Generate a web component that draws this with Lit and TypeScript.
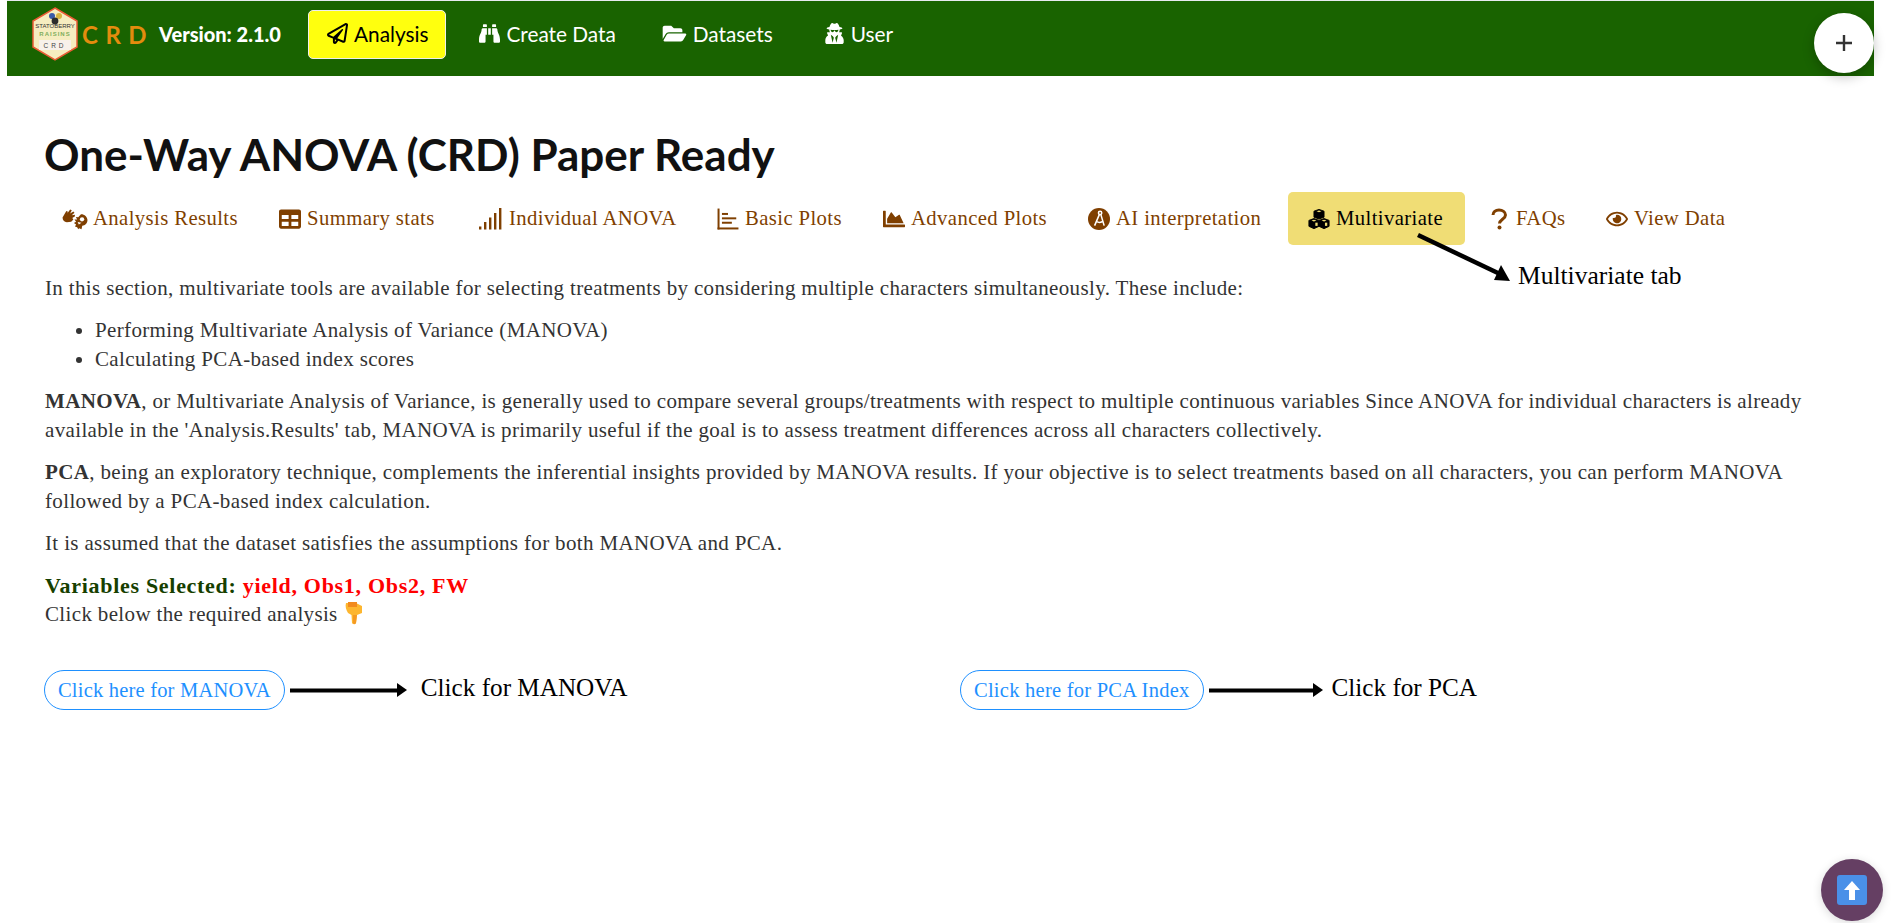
import { LitElement, css, html, svg } from "lit";
import { customElement } from "lit/decorators.js";

const icon = (box: string, d: string, cls = "") => html`<svg class="ico ${cls}" viewBox=${box}><path fill="currentColor" d=${d}></path></svg>`;

const plane = icon("0 0 512 512", "M440 6.5L24 246.4c-34.4 19.9-31.1 70.8 5.7 85.9L144 379.6V464c0 46.4 59.2 65.5 86.6 28.6l43.8-59.1 111.9 46.2c5.9 2.4 12.1 3.6 18.3 3.6 8.2 0 16.3-2.1 23.6-6.2 12.8-7.2 21.6-20 23.9-34.5l59.4-387.2c6.1-40.1-36.9-68.8-71.5-48.9zM192 464v-64.6l36.6 15.1L192 464zm212.6-28.7l-153.8-63.5L391 169.5c10.7-15.5-9.5-33.5-23.7-21.2L155.8 332.6 48 288 464 48l-59.4 387.3z");
const binoculars = icon("0 0 512 512", "M416 48c0-8.84-7.16-16-16-16h-64c-8.84 0-16 7.16-16 16v48h96V48zM63.91 159.99C61.4 253.84 3.46 274.22 0 404v44c0 17.67 14.33 32 32 32h96c17.67 0 32-14.33 32-32V288h32V128H95.84c-17.63 0-31.45 14.37-31.93 31.99zm384.18 0c-.48-17.62-14.3-31.99-31.93-31.99H320v160h32v160c0 17.67 14.33 32 32 32h96c17.67 0 32-14.33 32-32v-44c-3.46-129.78-61.4-150.16-63.91-244.01zM176 32h-64c-8.84 0-16 7.16-16 16v48h96V48c0-8.84-7.16-16-16-16zm48 256h64V128h-64v160z");
const folder = icon("0 0 576 512", "M572.694 292.093L500.27 416.248A63.997 63.997 0 0 1 444.989 448H45.025c-18.523 0-30.064-20.093-20.731-36.093l72.424-124.155A64 64 0 0 1 152 256h399.964c18.523 0 30.064 20.093 20.73 36.093zM152 224h328v-48c0-26.51-21.49-48-48-48H272l-64-64H48C21.49 64 0 85.49 0 112v278.046l69.077-118.418C86.214 242.25 117.989 224 152 224z", "wide");
const secret = icon("0 0 448 512", "M383.9 308.3l23.9-62.6c4-10.5-3.7-21.7-15-21.7h-58.5c11-18.9 17.8-40.6 17.8-64v-.3c39.2-7.8 64-19.1 64-31.7 0-13.3-27.3-25.1-70.1-33-9.2-32.8-27-65.8-40.6-82.8-9.5-11.9-25.9-15.6-39.5-8.8l-27.6 13.8c-9 4.5-19.6 4.5-28.6 0L182.1 3.4c-13.6-6.8-30-3.1-39.5 8.8-13.5 17-31.4 50-40.6 82.8-42.7 7.9-70 19.7-70 33 0 12.6 24.8 23.9 64 31.7v.3c0 23.4 6.8 45.1 17.8 64H56.3c-11.5 0-19.2 11.7-14.7 22.3l25.8 60.2C27.3 329.8 0 372.7 0 422.4v44.8C0 491.9 20.1 512 44.8 512h358.4c24.7 0 44.8-20.1 44.8-44.8v-44.8c0-48.4-25.8-90.4-64.1-114.1zM176 480l-41.6-192 49.6 32 24 40-32 120zm96 0l-32-120 24-40 49.6-32L272 480zm41.7-298.5c-3.9 11.9-7 24.6-16.5 33.4-10.1 9.3-48 22.4-64-25-2.8-8.4-15.4-8.4-18.3 0-17 50.2-56 32.4-64 25-9.5-8.8-12.7-21.5-16.5-33.4-.8-2.5-6.3-5.7-6.3-5.8v-10.8c28.3 3.6 61 5.8 96 5.8s67.7-2.1 96-5.8v10.8c-.1.1-5.6 3.2-6.4 5.8z");
const table = icon("0 0 512 512", "M464 32H48C21.49 32 0 53.49 0 80v352c0 26.51 21.49 48 48 48h416c26.51 0 48-21.49 48-48V80c0-26.51-21.49-48-48-48zM224 416H64v-96h160v96zm0-160H64v-96h160v96zm224 160H288v-96h160v96zm0-160H288v-96h160v96z");
const eye = icon("0 0 576 512", "M288 144a110.94 110.94 0 0 0-31.24 5 55.4 55.4 0 0 1 7.24 27 56 56 0 0 1-56 56 55.4 55.4 0 0 1-27-7.24A111.71 111.71 0 1 0 288 144zm284.52 97.4C518.29 135.59 410.93 64 288 64S57.68 135.64 3.48 241.41a32.35 32.35 0 0 0 0 29.19C57.71 376.41 165.07 448 288 448s230.32-71.64 284.52-177.41a32.35 32.35 0 0 0 0-29.19zM288 400c-98.65 0-189.09-55-237.93-144C98.91 167 189.34 112 288 112s189.09 55 237.93 144C477.1 345 386.66 400 288 400z");
const question = html`<svg class="ico q" viewBox="0 0 19 22"><path d="M2 7c0-3 2.500-5 6-5s6.500 2 6.500 5c0 4-6 4.500-6 8.500" fill="none" stroke="currentColor" stroke-width="3"></path><circle cx="8.500" cy="19.500" r="2" fill="currentColor"></circle></svg>`;
const area = icon("0 0 512 512", "M500 384c6.6 0 12 5.4 12 12v40c0 6.6-5.4 12-12 12H12c-6.6 0-12-5.4-12-12V76c0-6.6 5.4-12 12-12h40c6.6 0 12 5.4 12 12v308h436zM372.7 159.5L288 216l-85.3-113.7c-5.1-6.8-15.5-6.3-19.9 1L96 248v104h384l-89.9-187.8c-3.2-6.5-11.4-8.7-17.4-4.7z");
const hands = html`<svg class="ico hands" viewBox="0 0 24 20"><g fill="currentColor">
  <path d="M0.500 8.500 4 2.500 5.500 3.200 4.800 5 7.500 1.200 9 2 7.500 5 10.500 3 11.500 4.200 9 6.500 11.800 6 12 7.500 9.500 9 10.500 10.500 8.500 12.500 4.500 13C2 12.500.5 11 .5 8.500z"></path>
  <path d="M17.500 5.500C21 5.500 23.500 8 23.500 11c0 3-2.200 5-4.800 5.300L18 19.500 15.800 18.500 15 19.500 14 17.500 12 17 13 15 11 13.800 13 12.500 11.500 10.500 14 10.500 12.800 8.200 15 8.300z"></path>
</g><circle cx="18.500" cy="10.300" r="2" fill="#fff"></circle><path d="M14.500 12.800 18 13.500 15.500 15z" fill="#fff"></path></svg>`;
const bars = html`<svg class="ico wide" viewBox="0 0 24 22"><g fill="currentColor"><rect x="0" y="18.500" width="2.400" height="3"></rect><rect x="5" y="14" width="2.400" height="7.500"></rect><rect x="10" y="9.500" width="2.400" height="12"></rect><rect x="15" y="5" width="2.400" height="16.500"></rect><rect x="20" y="0" width="2.400" height="21.500"></rect></g></svg>`;
const chartBar = html`<svg class="ico" viewBox="0 0 20 20"><g fill="currentColor"><rect x="0.500" y="0.500" width="1.800" height="19"></rect><rect x="0.500" y="17.700" width="19" height="1.800"></rect><rect x="4.500" y="4.500" width="5.500" height="1.800"></rect><rect x="4.500" y="8.500" width="13" height="1.800"></rect><rect x="4.500" y="12.500" width="9" height="1.800"></rect></g></svg>`;
const compass = html`<svg class="ico" viewBox="0 0 20 20"><circle cx="10" cy="10" r="10" fill="currentColor"></circle><g stroke="#fff" stroke-width="1.400" fill="none"><circle cx="11" cy="4.500" r="1.500"></circle><path d="M10.300 6 6 16M11.700 6l3 10M7.500 12.200c2 1.200 4.500 1.200 6.500-.5"></path></g></svg>`;
const cubes = html`<svg class="ico" viewBox="0 0 24 22"><g stroke="currentColor" stroke-width="1" fill="currentColor" stroke-linejoin="round"><path d="M12 0.500l5.500 2v6.500L12 11l-5.500-2V2.500z"></path><path d="M6.500 10.500l5.500 2V19l-5.500 2.500L1 19v-6.500z"></path><path d="M17.500 10.500l5.500 2V19l-5.500 2.500L12 19v-6.500z"></path></g><g fill="#f0dd75"><path d="M9.300 2.600 12 1.700l2.700.9-2.700 1z"></path><path d="M3.800 12.600l2.700-.9 2.700.9-2.700 1z"></path><path d="M14.800 12.600l2.700-.9 2.700.9-2.700 1z"></path><rect x="18.500" y="15" width="2.500" height="3.500"></rect><rect x="8" y="15" width="2.500" height="3.500"></rect></g></svg>`;

const tabs = [
  { label: "Analysis Results", ico: hands },
  { label: "Summary stats", ico: table },
  { label: "Individual ANOVA", ico: bars },
  { label: "Basic Plots", ico: chartBar },
  { label: "Advanced Plots", ico: area },
  { label: "AI interpretation", ico: compass },
  { label: "Multivariate", ico: cubes, active: true },
  { label: "FAQs", ico: question },
  { label: "View Data", ico: eye },
];

const arrow = (len: number) => html`<svg class="arrow" width=${len} height="18" viewBox="0 0 ${len} 18">
  <path d="M0 9.500H${len - 8}" stroke="#000" stroke-width="4"></path>
  <path d="M${len - 10} 2L${len} 9 ${len - 10} 16z" fill="#000"></path>
</svg>`;

const logo = svg`
  <path d="M23 1 45 14V40L23 53 1 40V14z" fill="#f6edc0" stroke="#ea5c35" stroke-width="1.500"></path>
  <circle cx="20" cy="9" r="3" fill="#3a5aa8"></circle><circle cx="27" cy="9" r="3" fill="#d9b440"></circle><circle cx="23" cy="14" r="3.400" fill="#2c2c2c"></circle>
  <text x="23" y="21" text-anchor="middle" font-size="6" font-family="Liberation Sans" fill="#333">STATOBERRY</text>
  <text x="23" y="29" text-anchor="middle" font-size="6" font-weight="700" letter-spacing="1" font-family="Liberation Sans" fill="#7fae5c">RAISINS</text>
  <rect x="7" y="33" width="32" height="10" fill="#f8f1ea"></rect>
  <text x="23" y="41" text-anchor="middle" font-size="6.500" letter-spacing="3" font-family="Liberation Sans" fill="#444">CRD</text>`;

@customElement("app-root")
export class AppRoot extends LitElement {
  static styles = css`
    :host {
      display: block;
      position: relative;
      height: 923px;
      overflow: hidden;
      background: #fff;
      font-family: "Liberation Serif", serif;
    }
    .ico { width: 22px; height: 22px; flex: none; display: block; }
    .ico.hands { width: 26px; margin-right: -1px; }
    .ico.wide { width: 24px; }
    .ico.q { width: 19px; height: 22px; }
    .top {
      display: flex;
      align-items: center;
      height: 75px;
      margin: 1px 18px 0 7px;
      padding: 0 0 9px 24px;
      box-sizing: border-box;
      background: #196300;
      box-shadow: 0 -1px 0 #e8eaf0;
      font-family: "Lato", sans-serif;
    }
    .logo { width: 48px; height: 54px; flex: none; }
    .crd {
      margin-left: 3px;
      width: 77px;
      color: #e38c0e;
      font-weight: 700;
      font-size: 24px;
      letter-spacing: 7.500px;
    }
    .ver { width: 149px; color: #fff; font-weight: 900; font-size: 20px; }
    .item {
      display: flex;
      align-items: center;
      gap: 6px;
      height: 49px;
      padding: 0 17px 2px 18px;
      box-sizing: border-box;
      border-radius: 5px;
      color: #fff;
      font-size: 20.800px;
      white-space: nowrap;
    }
    .item .ico { width: 21px; height: 21px; }
    .item .ico.wide { width: 25px; }
    .item.on { background: #ffff0e; color: #000; border: 1px solid #eee; margin-right: 15px; }
    .item.data { margin-right: 11px; }
    .item.sets { margin-right: 16px; }
    main { padding: 0 0 0 45px; position: relative; }
    h1 {
      margin: 0 0 0 -1px;
      padding-top: 50px;
      height: 56px;
      line-height: 56px;
      font-family: "Lato", sans-serif;
      font-size: 44px;
      font-weight: 700;
      color: #111;
    }
    .tabs {
      display: grid;
      grid-template-columns: 217px 200px 238px 166px 205px 220px 183px 115px auto;
      margin: 10px 0 0 -3px;
    }
    .tab {
      display: flex;
      align-items: center;
      gap: 6px;
      height: 53px;
      padding: 0 0 0 20px;
      box-sizing: border-box;
      border-radius: 5px;
      color: #7f3f00;
      font-size: 20.700px;
      letter-spacing: 0.400px;
      white-space: nowrap;
    }
    .tab.on { background: #f0dd75; color: #000; width: 177px; }
    .body {
      width: 1790px;
      margin-top: 29px;
      color: #333;
      font-size: 21px;
      letter-spacing: 0.350px;
      line-height: 29px;
    }
    p { margin: 0 0 13px; }
    ul { margin: 0 0 13px; padding-left: 50px; }
    .vars { font-weight: 700; color: #173f00; font-size: 22px; letter-spacing: 0.700px; }
    .vars b { color: #f00; }
    .hand { display: inline-block; vertical-align: -4px; margin-left: 2px; }
    .actions { display: grid; grid-template-columns: 916px 916px; margin: 41px 0 0 -1px; }
    .act { display: flex; align-items: center; }
    .btn {
      height: 40px;
      padding: 0 13px;
      display: flex;
      align-items: center;
      box-sizing: border-box;
      border: 1px solid #1e90ff;
      border-radius: 20px;
      color: #1e90ff;
      font-size: 20.500px;
      letter-spacing: 0.200px;
      white-space: nowrap;
    }
    .arrow { margin: 0 14px 0 5px; flex: none; }
    .act.pca .arrow { margin: 0 9px 0 5px; }
    .act.pca .btn { letter-spacing: 0.250px; }
    .note { color: #000; font-size: 25.200px; margin-top: -4px; white-space: nowrap; }
    .tabnote { position: absolute; left: 1518px; top: 185px; margin: 0; font-size: 25.500px; }
    .tabarrow { position: absolute; left: 1410px; top: 228px; }
    .fab {
      position: absolute;
      left: 1814px;
      top: 13px;
      width: 60px;
      height: 60px;
      border-radius: 50%;
      background: #fff;
      box-shadow: 0 4px 12px rgba(0, 0, 0, 0.25);
      display: flex;
      align-items: center;
      justify-content: center;
    }
    .up {
      position: absolute;
      left: 1821px;
      top: 859px;
      width: 62px;
      height: 62px;
      border-radius: 50%;
      background: #653f63;
      box-shadow: 0 2px 10px rgba(0, 0, 0, 0.15);
      display: flex;
      align-items: center;
      justify-content: center;
    }
  `;

  render() {
    return html`
      <header class="top">
        <svg class="logo" viewBox="0 0 46 54">${logo}</svg>
        <span class="crd">CRD</span>
        <span class="ver">Version: 2.1.0</span>
        <a class="item on">${plane}Analysis</a>
        <a class="item data">${binoculars}Create Data</a>
        <a class="item sets">${folder}Datasets</a>
        <a class="item">${secret}User</a>
      </header>
      <main>
        <h1>One-Way ANOVA (CRD) Paper Ready</h1>
        <nav class="tabs">
          ${tabs.map((t) => html`<a class="tab ${t.active ? "on" : ""}">${t.ico}${t.label}</a>`)}
        </nav>
        <section class="body">
          <p>In this section, multivariate tools are available for selecting treatments by considering multiple characters simultaneously. These include:</p>
          <ul>
            <li>Performing Multivariate Analysis of Variance (MANOVA)</li>
            <li>Calculating PCA-based index scores</li>
          </ul>
          <p><strong>MANOVA</strong>, or Multivariate Analysis of Variance, is generally used to compare several groups/treatments with respect to multiple continuous variables Since ANOVA for individual characters is already available in the 'Analysis.Results' tab, MANOVA is primarily useful if the goal is to assess treatment differences across all characters collectively.</p>
          <p><strong>PCA</strong>, being an exploratory technique, complements the inferential insights provided by MANOVA results. If your objective is to select treatments based on all characters, you can perform MANOVA followed by a PCA-based index calculation.</p>
          <p>It is assumed that the dataset satisfies the assumptions for both MANOVA and PCA.</p>
          <div class="vars">Variables Selected: <b>yield, Obs1, Obs2, FW</b></div>
          <div>Click below the required analysis
            <svg class="hand" width="20" height="24" viewBox="0 0 20 24">
              <path d="M1 2h10l6 3v7l-5 2-1 8c-.5 1.500-3.500 1.500-4 0L6.500 14 3 12C1 9 0 5 1 2z" fill="#fdb62f"></path>
              <path d="M3 1h9v5H3z" fill="#f28a1e"></path>
              <path d="M8 14h4l-1 8c-.5 1.500-2.500 1.500-3 0z" fill="#f59a23"></path>
            </svg>
          </div>
        </section>
        <div class="actions">
          <div class="act"><a class="btn">Click here for MANOVA</a>${arrow(117)}<span class="note">Click for MANOVA</span></div>
          <div class="act pca"><a class="btn">Click here for PCA Index</a>${arrow(114)}<span class="note">Click for PCA</span></div>
        </div>
        <span class="note tabnote">Multivariate tab</span>
      </main>
      <svg class="tabarrow" width="110" height="60" viewBox="0 0 110 60">
        <path d="M8 7 90 46" stroke="#000" stroke-width="4.500"></path>
        <path d="M100 53 84 52 91 37z" fill="#000"></path>
      </svg>
      <div class="fab">
        <svg width="20" height="20" viewBox="0 0 20 20"><path d="M10 2v16M2 10h16" stroke="#333" stroke-width="2.400"></path></svg>
      </div>
      <div class="up">
        <svg width="30" height="30" viewBox="0 0 30 30">
          <rect width="30" height="30" rx="3" fill="#4a90e8"></rect>
          <path d="M15 6l8 9h-5v10h-6V15H7z" fill="#fff"></path>
        </svg>
      </div>
    `;
  }
}
